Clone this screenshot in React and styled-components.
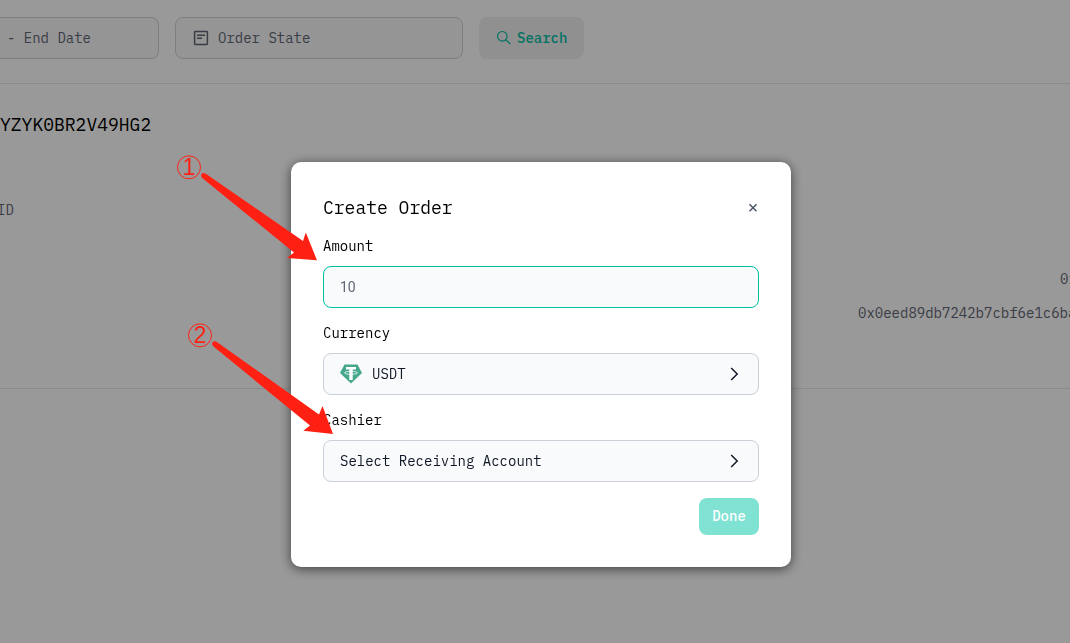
import React from "react";
import styled, { createGlobalStyle } from "styled-components";

const GlobalStyle = createGlobalStyle`
  * { box-sizing: border-box; }
  body { margin: 0; background: #fff; color: #000; overflow: hidden; }
  body, button, input { font-family: "IBM Plex Mono", "Liberation Mono", monospace; font-size: 14px; line-height: 20px; }
`;

const Page = styled.main`
  min-height: 100vh;
  overflow: hidden;
`;

const Toolbar = styled.div`
  display: flex;
  gap: 16px;
  padding: 17px 16px 24px 0;
  border-bottom: 1px solid #e5e7eb;
`;

const FilterButton = styled.button`
  display: flex;
  align-items: center;
  gap: 8px;
  width: ${(p) => (p.$cut ? "159px" : "288px")};
  height: 42px;
  padding: 0 ${(p) => (p.$cut ? "7px" : "16px")};
  border: 1px solid #d1d3db;
  border-left-width: ${(p) => (p.$cut ? "0" : "1px")};
  border-radius: ${(p) => (p.$cut ? "0 8px 8px 0" : "8px")};
  background: #f8f9fa;
  color: #5f6673;
  white-space: pre;
`;

const SearchButton = styled.button`
  display: flex;
  align-items: center;
  gap: 4px;
  height: 42px;
  padding: 0 17px;
  border: 0;
  border-radius: 8px;
  background: #f1f1f2;
  color: #00bfa5;
  font-weight: 500;
`;

const OrderCard = styled.section`
  padding: 29px 0 65px;
  border-bottom: 1px solid #e5e7eb;
`;

const OrderNumber = styled.h2`
  margin: 0;
  font-size: 18px;
  font-weight: 400;
  line-height: 24px;
`;

const Details = styled.dl`
  display: grid;
  grid-template-columns: 1fr 212px;
  row-gap: 14px;
  margin: 0;
  padding-top: 63px;
  color: #5f6673;
`;

const DetailName = styled.dt`
  grid-column: 1 / -1;
  margin-left: -3px;
  padding-bottom: 35px;
`;

const DetailValue = styled.dd`
  grid-column: 2;
  margin: 0;
  padding-left: ${(p) => (p.$short ? "202px" : "0")};
  white-space: nowrap;
`;

const Overlay = styled.div`
  position: fixed;
  inset: 0;
  display: flex;
  justify-content: center;
  align-items: flex-start;
  padding: 162px 0 0 12px;
  background: rgba(0, 0, 0, 0.4);
`;

const Dialog = styled.form`
  position: relative;
  width: 500px;
  padding: 32px;
  border-radius: 10px;
  background: #fff;
  box-shadow: 0 2px 12px rgba(0, 0, 0, 0.6);
`;

const DialogHeader = styled.header`
  display: flex;
  align-items: center;
  justify-content: space-between;
  height: 28px;
`;

const Title = styled.h1`
  margin: 0;
  font-size: 18px;
  font-weight: 400;
  line-height: 28px;
`;

const CloseButton = styled.button`
  display: flex;
  padding: 0;
  border: 0;
  background: none;
  color: #4b5563;
`;

const Field = styled.div`
  display: flex;
  flex-direction: column;
  gap: 10px;
  padding-top: 15px;
`;

const Fields = styled.div`
  margin-top: -1px;
`;

const Label = styled.label`
  line-height: 20px;
`;

const AmountInput = styled.input`
  height: 42px;
  padding: 0 16px;
  border: 1px solid #00bfa5;
  border-radius: 8px;
  outline: 0;
  background: #f8fafc;
  color: #5f6673;
  font-family: Roboto, sans-serif;
`;

const PickerButton = styled.button`
  display: flex;
  align-items: center;
  gap: 10px;
  height: 42px;
  padding: 0 16px;
  border: 1px solid #cbd0d8;
  border-radius: 8px;
  background: #f8fafc;
  color: #111827;
  text-align: left;

  svg:last-child { margin-left: auto; }
`;

const Actions = styled.footer`
  display: flex;
  justify-content: flex-end;
  padding-top: 16px;
`;

const DoneButton = styled.button`
  width: 60px;
  padding: 8px 0 9px;
  border: 0;
  border-radius: 8px;
  background: #80e2d3;
  color: #fff;
  font-weight: 500;
`;

const Callout = styled.div`
  position: absolute;
  left: ${(p) => p.$left};
  top: ${(p) => p.$top};
  color: #ff2014;
  pointer-events: none;

  svg { display: block; overflow: visible; }
  text { font-family: "Liberation Sans", sans-serif; font-size: 23px; }
`;

const Chevron = () => (
  <svg width="16" height="16" viewBox="0 0 16 16" fill="none" stroke="currentColor" strokeWidth="1.5" aria-hidden="true">
    <path d="M5.2 2 11.2 8l-6 6" />
  </svg>
);

const Marker = ({ number, left, top, arrow }) => (
  <Callout $left={left} $top={top}>
    <svg width="148" height="112" viewBox="0 0 148 112" fill="currentColor">
      <circle cx="13" cy="13.3" r="11.5" fill="none" stroke="currentColor" />
      <text x="13" y="21" textAnchor="middle">{number}</text>
      <path d={arrow} />
    </svg>
  </Callout>
);

export default function App() {
  return (
    <>
      <GlobalStyle />
      <Page>
        <Toolbar>
          <FilterButton type="button" $cut>- End Date</FilterButton>
          <FilterButton type="button">
            <svg width="18" height="18" viewBox="0 0 18 18" fill="none" stroke="currentColor" strokeWidth="1.5" aria-hidden="true">
              <rect x="2.6" y="2.6" width="12.8" height="12.8" rx=".6" />
              <path d="M5 6.3h8M5 9.300h5" />
            </svg>
            Order State
          </FilterButton>
          <SearchButton type="button">
            <svg width="17" height="18" viewBox="0 0 17 18" fill="none" stroke="currentColor" strokeWidth="1.2" aria-hidden="true">
              <circle cx="6.300" cy="7.300" r="4.800" />
              <path d="m9.800 10.800 4.500 4.200" />
            </svg>
            Search
          </SearchButton>
        </Toolbar>
        <OrderCard>
          <OrderNumber>YZYK0BR2V49HG2</OrderNumber>
          <Details>
            <DetailName>ID</DetailName>
            <DetailValue $short>0x</DetailValue>
            <DetailValue>0x0eed89db7242b7cbf6e1c6ba</DetailValue>
          </Details>
        </OrderCard>
      </Page>
      <Overlay>
        <Dialog role="dialog" aria-labelledby="dialog-title">
          <DialogHeader>
            <Title id="dialog-title">Create Order</Title>
            <CloseButton type="button" aria-label="Close">
              <svg width="12" height="12" viewBox="0 0 12 12" fill="none" stroke="currentColor" strokeWidth="1.5">
                <path d="m2.500 2.300 7 7m0-7-7 7" />
              </svg>
            </CloseButton>
          </DialogHeader>
          <Fields>
            <Field>
              <Label htmlFor="amount">Amount</Label>
              <AmountInput id="amount" defaultValue="10" />
            </Field>
            <Field>
              <Label htmlFor="currency">Currency</Label>
              <PickerButton id="currency" type="button">
                <svg width="22" height="20" viewBox="0 0 22 20" aria-hidden="true">
                  <path fill="#45a88c" d="M4.500.5h13L22 9 11 19.500 0 9Z" />
                  <path fill="#fff" d="M6 3h10v2.600h-3.300V16H9.300V5.600H6Z" />
                  <ellipse cx="11" cy="8.800" rx="6.500" ry="1.500" fill="none" stroke="#fff" strokeWidth=".8" />
                </svg>
                USDT
                <Chevron />
              </PickerButton>
            </Field>
            <Field>
              <Label htmlFor="cashier">Cashier</Label>
              <PickerButton id="cashier" type="button">
                Select Receiving Account
                <Chevron />
              </PickerButton>
            </Field>
          </Fields>
          <Actions>
            <DoneButton type="submit">Done</DoneButton>
          </Actions>
          <Marker
            number="1"
            left="-115px"
            top="-8px"
            arrow="M29.500 19.500C26 17.500 23.500 21.500 26.500 24.300L118 98.500 111 104 141 106.300 129.800 78.500 127 87Z"
          />
          <Marker
            number="2"
            left="-104px"
            top="160px"
            arrow="M29.500 19.700C26 17.700 23.500 21.700 26.500 24.500L123 103.500 116.300 108.800 146 112 135.500 84 132 92.500Z"
          />
        </Dialog>
      </Overlay>
    </>
  );
}
